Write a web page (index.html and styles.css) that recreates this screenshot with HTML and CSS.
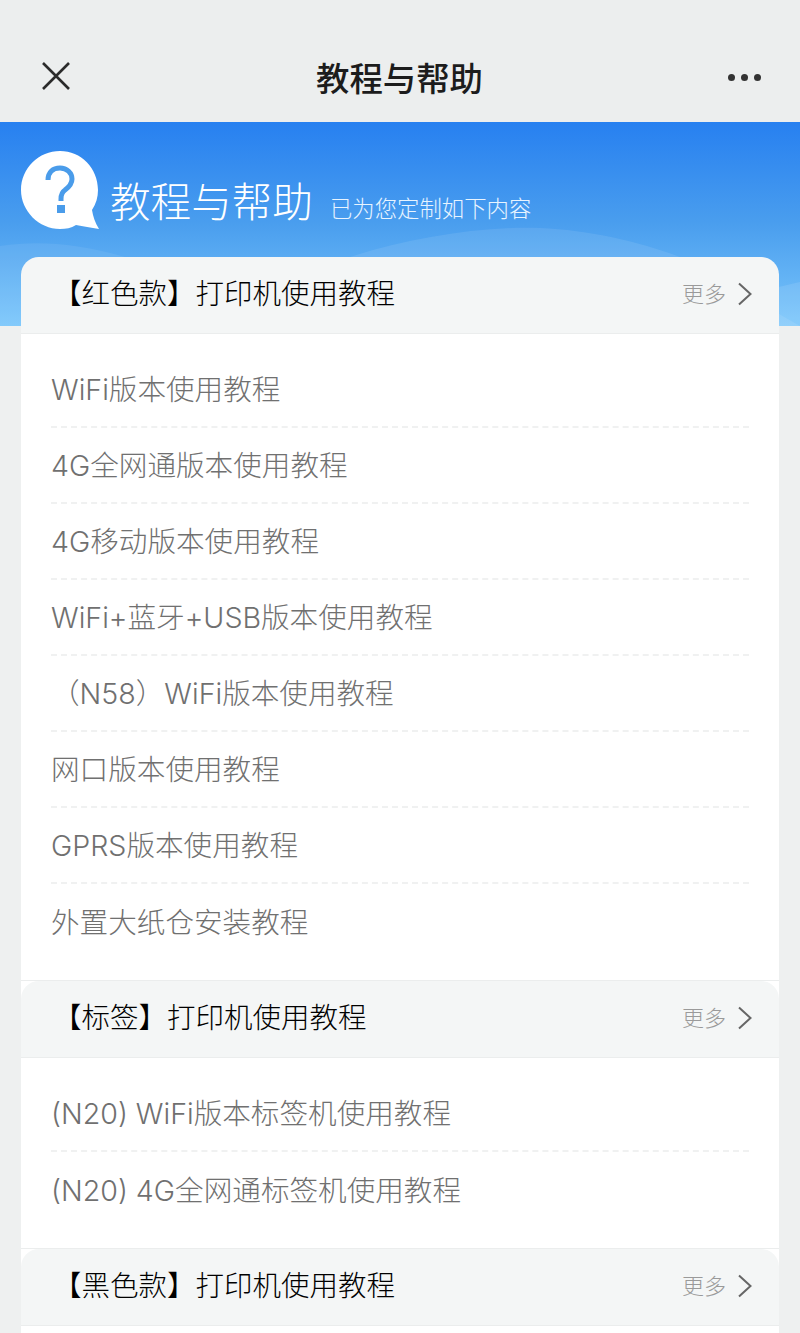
FILE: index.html
```html
<!DOCTYPE html>
<html lang="zh-CN">
<head>
    <meta charset="UTF-8">
    <meta name="viewport" content="width=device-width, initial-scale=1.0">
    <title>教程与帮助</title>
    <link rel="stylesheet" href="styles.css">
</head>
<body>
    <header class="topbar">
        <svg class="close-icon" width="30" height="30" viewBox="0 0 30 30"><path d="M2 2L28 28M28 2L2 28" fill="none" stroke="#2b2b2b" stroke-width="2.6"/></svg>
        <h1 class="topbar-title">教程与帮助</h1>
        <div class="dots"><span></span><span></span><span></span></div>
    </header>

    <section class="hero">
        <svg class="hero-waves" width="800" height="204" viewBox="0 0 800 204" preserveAspectRatio="none">
            <path d="M0 124C40 118 80 122 125 135L125 204H0Z" fill="#fff" opacity="0.07"/>
            <path d="M350 135C410 116 480 104 540 106C590 108 640 120 680 135L800 204H300Z" fill="#fff" opacity="0.09"/>
            <path d="M690 204C730 180 770 166 800 160V204Z" fill="#fff" opacity="0.1"/>
        </svg>
        <svg class="hero-icon" width="78" height="78" viewBox="0 0 78 78">
            <path d="M39 0C60 0 77 17 77 39C77 46 75 53 71 59C72 65 74 72 78 78C70 77 62 75 55 74C50 77 45 78 39 78C18 78 0 60 0 39C0 17 18 0 39 0Z" fill="#fff"/>
            <path d="M27 29C27 21 32 17 39 17C46 17 51 22 51 28C51 33 48 36 44 39C41 41 40 43 40 48V50" fill="none" stroke="#4a9cea" stroke-width="5"/>
            <rect x="36" y="54" width="8" height="8" fill="#4a9cea"/>
        </svg>
        <h2 class="hero-title">教程与帮助</h2>
        <span class="hero-sub">已为您定制如下内容</span>
    </section>

    <main class="card">
        <div class="section-head">
            <span class="section-title">【红色款】打印机使用教程</span>
            <a class="more">更多<svg width="16" height="24" viewBox="0 0 16 24"><path d="M2 1.5L13.5 12L2 22.5" fill="none" stroke="#666" stroke-width="2"/></svg></a>
        </div>
        <ul class="list">
            <li>WiFi版本使用教程</li>
            <li>4G全网通版本使用教程</li>
            <li>4G移动版本使用教程</li>
            <li>WiFi+蓝牙+USB版本使用教程</li>
            <li>（N58）WiFi版本使用教程</li>
            <li>网口版本使用教程</li>
            <li>GPRS版本使用教程</li>
            <li>外置大纸仓安装教程</li>
        </ul>

        <div class="section-head">
            <span class="section-title">【标签】打印机使用教程</span>
            <a class="more">更多<svg width="16" height="24" viewBox="0 0 16 24"><path d="M2 1.5L13.5 12L2 22.5" fill="none" stroke="#666" stroke-width="2"/></svg></a>
        </div>
        <ul class="list">
            <li>(N20) WiFi版本标签机使用教程</li>
            <li>(N20) 4G全网通标签机使用教程</li>
        </ul>

        <div class="section-head">
            <span class="section-title">【黑色款】打印机使用教程</span>
            <a class="more">更多<svg width="16" height="24" viewBox="0 0 16 24"><path d="M2 1.5L13.5 12L2 22.5" fill="none" stroke="#666" stroke-width="2"/></svg></a>
        </div>
    </main>
</body>
</html>
```

FILE: styles.css
```css
html, body {
    height: 100%;
    overflow: hidden;
}

body {
    margin: 0;
    padding: 0;
    background-color: #eef0f0;
    font-family: "Liberation Sans", "Noto Sans CJK SC", sans-serif;
}

.topbar {
    height: 122px;
    box-sizing: border-box;
    padding: 30px 39px 0 41px;
    background-color: #eceeee;
    display: flex;
    align-items: center;
    justify-content: space-between;
}

.topbar-title {
    margin: 0;
    font-size: 33.4px;
    font-weight: 500;
    color: #1c1c1c;
}

.dots {
    display: flex;
    gap: 6px;
    margin-top: 2px;
}

.dots span {
    width: 7px;
    height: 7px;
    border-radius: 50%;
    background-color: #333;
}

.hero {
    position: relative;
    height: 204px;
    box-sizing: border-box;
    padding: 29px 0 0 21px;
    display: flex;
    align-items: flex-start;
    background: linear-gradient(180deg, #2780f0 0%, #4a9eee 50%, #7ac6fb 100%);
}

.hero-waves {
    position: absolute;
    left: 0;
    top: 0;
}

.hero-icon {
    position: relative;
    flex-shrink: 0;
}

.hero-title {
    position: relative;
    margin: 22px 0 0 11px;
    font-size: 40.6px;
    font-weight: 300;
    line-height: 60px;
    color: #fff;
}

.hero-sub {
    position: relative;
    margin: 42px 0 0 17px;
    font-size: 22.4px;
    font-weight: 300;
    line-height: 34px;
    color: #e8f4ff;
}

.card {
    position: relative;
    margin: -69px 21px 0;
    padding-bottom: 30px;
    background-color: #fff;
    border-radius: 22px 22px 0 0;
}

.section-head {
    height: 77px;
    box-sizing: border-box;
    padding: 0 26px 7px 32px;
    display: flex;
    align-items: center;
    justify-content: space-between;
    background-color: #f4f6f6;
    border-bottom: 1px solid #ebeded;
    border-radius: 18px 18px 0 0;
}

.section-title {
    font-size: 28.5px;
    font-weight: 300;
    color: #000;
}

.more {
    display: flex;
    align-items: center;
    gap: 11px;
    font-size: 22px;
    font-weight: 300;
    color: #9a9a9a;
}

.more svg {
    margin-top: 5px;
}

.list {
    list-style: none;
    margin: 0;
    padding: 18px 30px 20px 30px;
    border-bottom: 1px solid #ebeded;
}

.list li {
    height: 76px;
    box-sizing: border-box;
    padding-bottom: 3px;
    display: flex;
    align-items: center;
    font-family: Inter, "Noto Sans CJK SC", sans-serif;
    font-size: 28.6px;
    font-weight: 300;
    color: #707070;
    border-bottom: 2px dashed #f0f1f1;
}

.list li:last-child {
    border-bottom: none;
}
```
